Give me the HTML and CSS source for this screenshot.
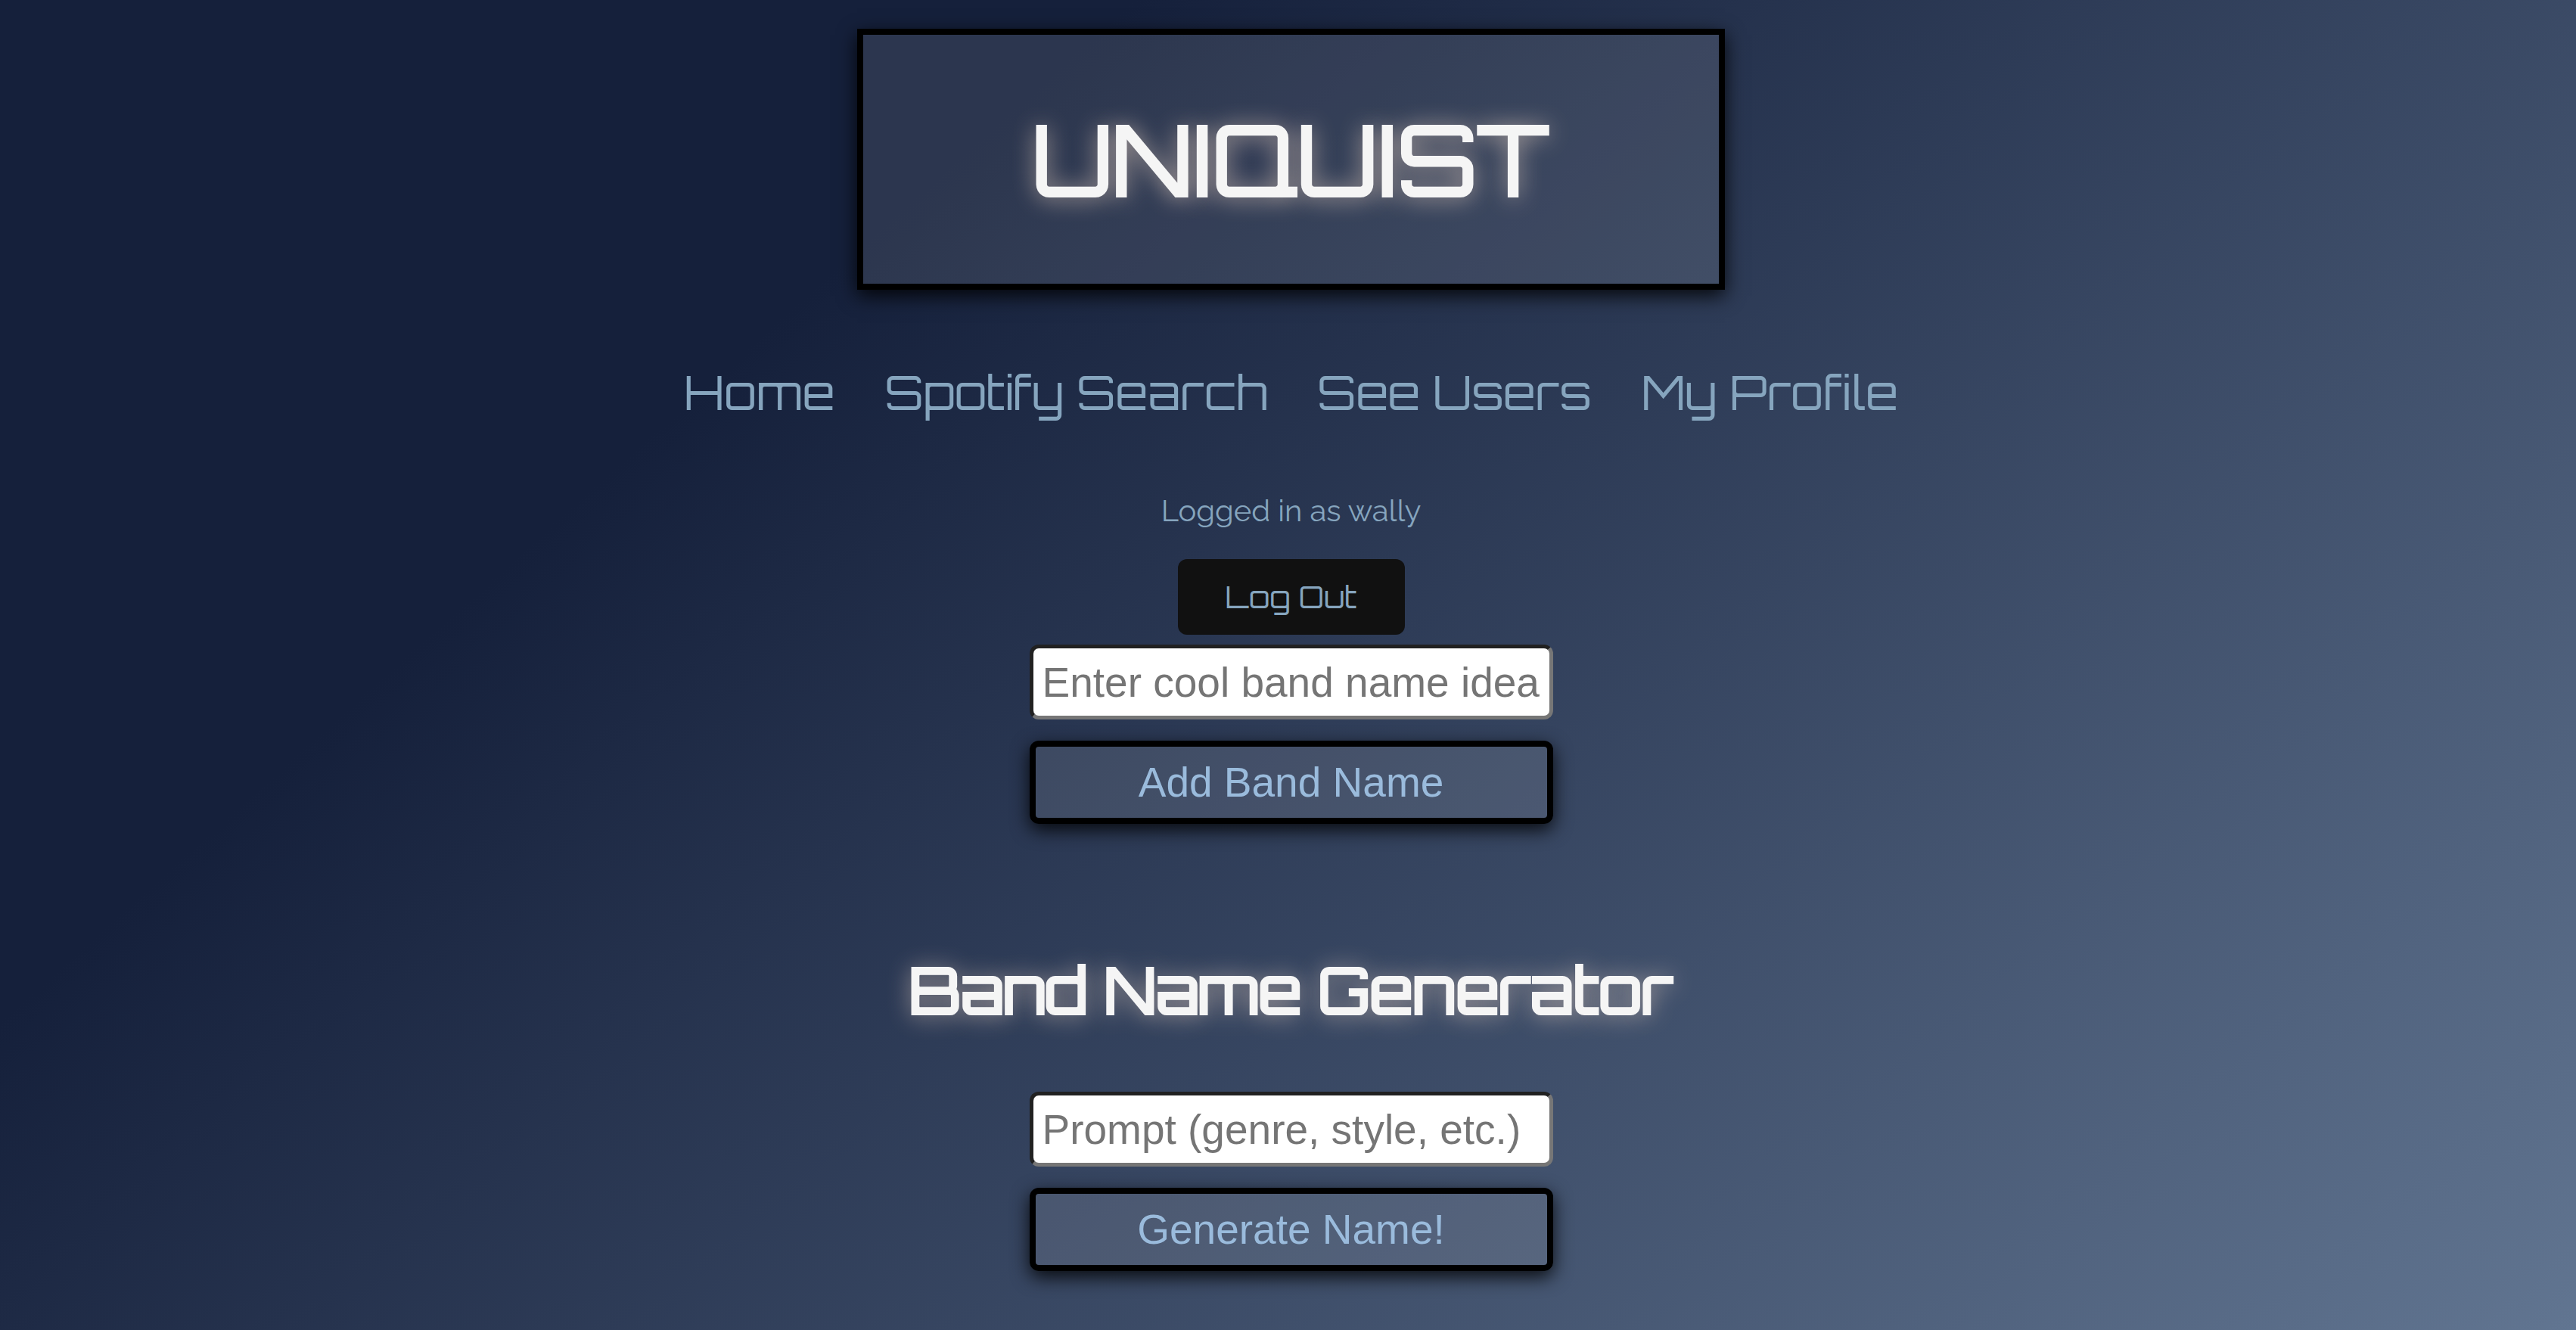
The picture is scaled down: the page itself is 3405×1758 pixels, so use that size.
FILE: index.html
```html
<!DOCTYPE html>
<html lang="en">
<head>
<meta charset="utf-8">
<title>Uniquist</title>
<link rel="stylesheet" href="styles.css">
</head>
<body>
<header class="banner"><h1 class="title">UNIQUIST</h1></header>
<nav class="nav">
<a href="#">Home</a>
<a href="#">Spotify Search</a>
<a href="#">See Users</a>
<a href="#">My Profile</a>
</nav>
<p class="status">Logged in as wally</p>
<button class="logout" type="button">Log Out</button>
<form class="form">
<input class="field" type="text" aria-label="Band name idea" placeholder="Enter cool band name idea">
<button class="submit" type="button">Add Band Name</button>
</form>
<h2 class="heading">Band Name Generator</h2>
<form class="form">
<input class="field" type="text" aria-label="Prompt" placeholder="Prompt (genre, style, etc.)">
<button class="submit" type="button">Generate Name!</button>
</form>
</body>
</html>
```

FILE: styles.css
```css
* { box-sizing: border-box; }
html { min-height: 100%; background: linear-gradient(138deg, #15203b 28%, #617591 100%); }
body { margin: 0; padding: 38px 0 60px 8px; display: flex; flex-direction: column; align-items: center; font-family: Orbitron, "Liberation Sans", sans-serif; color: #86a5be; }
.banner { padding: 60px 224px; border: 8px solid #000; background: rgba(255, 255, 255, 0.1); box-shadow: 0 8px 24px rgba(0, 0, 0, 0.85); }
.title, .heading { font-weight: 400; color: #f5f5f5; -webkit-text-stroke: 4px #f5f5f5; text-shadow: 0 2px 30px rgba(255, 228, 205, 0.8); }
.title { margin: 0; font-size: 127px; line-height: 209px; }
.nav { display: flex; gap: 66px; margin-top: 90px; }
.nav a { color: #86a5be; text-decoration: none; font-size: 62px; line-height: 90px; }
.status { margin: 88px 0 40px; font: 40px/48px Raleway, Lato, sans-serif; }
.logout { width: 300px; height: 100px; border: 0; border-radius: 12px; background: #111; color: #86a5be; font: 40px Orbitron, "Open Sans", sans-serif; }
.form { display: flex; flex-direction: column; gap: 28px; width: 692px; margin-top: 13px; }
.field { height: 99px; border: 5px inset #767676; border-radius: 12px; padding: 0 12px; font: 55px "Liberation Sans", Arial, sans-serif; }
.field::placeholder { color: #757575; }
.submit { height: 110px; border: 8px solid #000; border-radius: 12px; background: rgba(255, 255, 255, 0.1); color: #9abbdc; font: 55px "Liberation Sans", Arial, sans-serif; box-shadow: 0 8px 24px rgba(0, 0, 0, 0.85); }
.heading { margin: 160px 0 61px; font-size: 82px; line-height: 120px; }
```
